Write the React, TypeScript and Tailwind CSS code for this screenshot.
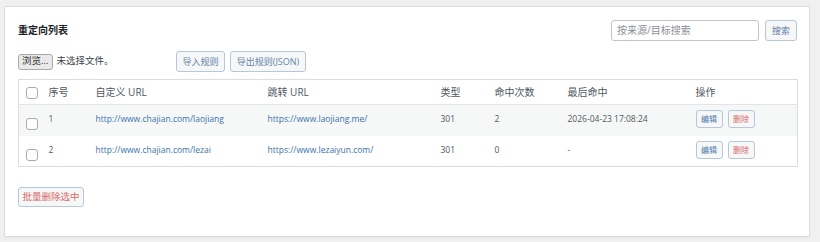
import React from "react";

const font = { fontFamily: '"Open Sans", "Noto Sans CJK SC", sans-serif' };

type Rule = { id: number; from: string; to: string; type: string; hits: string; last: string };

const rules: Rule[] = [
  { id: 1, from: "http://www.chajian.com/laojiang", to: "https://www.laojiang.me/", type: "301", hits: "2", last: "2026-04-23 17:08:24" },
  { id: 2, from: "http://www.chajian.com/lezai", to: "https://www.lezaiyun.com/", type: "301", hits: "0", last: "-" },
];

const Check = () => (
  <span className="inline-block w-[12px] h-[12px] rounded-[3px] border border-[#a7aaad] bg-white align-middle" />
);

export default function App() {
  return (
    <div className="w-[820px] h-[242px] bg-[#f0f0f1] pt-[6px] pl-[4px]" style={font}>
      <div className="w-[806px] h-[231px] bg-white border border-[#dcdcde] rounded-[2px] shadow-[0_1px_1px_rgba(0,0,0,0.04)] pt-[13px] pl-[13px] pr-[12px]">
        <div className="flex items-center justify-between h-[21px]">
          <h2 className="text-[10px] font-bold text-[#1d2327]">重定向列表</h2>
          <div className="flex items-center gap-[6px]">
            <div className="w-[148px] h-[21px] border border-[#c3c4c7] rounded-[3px] pl-[5px] flex items-center text-[10px] text-[#8c8f94]">
              按来源/目标搜索
            </div>
            <button className="w-[32px] h-[21px] border border-[#b7c6d9] bg-[#f6f7f7] rounded-[3px] text-[9px] text-[#5a7ea8]">搜索</button>
          </div>
        </div>

        <div className="flex items-center mt-[10px] h-[21px]">
          <div className="w-[158px] flex items-center gap-[4px]">
            <span className="h-[16px] px-[3px] flex items-center border border-[#a9a9a9] bg-[#e9e9ea] rounded-[3px] text-[9.5px] text-[#333]">浏览...</span>
            <span className="text-[9.5px] text-[#3c434a]">未选择文件。</span>
          </div>
          <div className="flex gap-[5px]">
            <button className="w-[49px] h-[21px] border border-[#b7c6d9] bg-[#f6f7f7] rounded-[3px] text-[9px] text-[#6585ab]">导入规则</button>
            <button className="w-[76px] h-[21px] border border-[#b7c6d9] bg-[#f6f7f7] rounded-[3px] text-[9px] text-[#6585ab]">导出规则(JSON)</button>
          </div>
        </div>

        <table className="mt-[7px] w-[779px] table-fixed border border-[#dcdcde] border-collapse text-[10px] text-[#50575e]">
          <colgroup>
            <col className="w-[30px]" />
            <col className="w-[47px]" />
            <col className="w-[172px]" />
            <col className="w-[173px]" />
            <col className="w-[54px]" />
            <col className="w-[73px]" />
            <col className="w-[128px]" />
            <col className="w-[102px]" />
          </colgroup>
          <thead>
            <tr className="h-[25px] border-b border-[#e4e4e6] text-left">
              <th className="font-normal pl-[7px] pt-[1px]"><Check /></th>
              <th className="font-normal">序号</th>
              <th className="font-normal">自定义 URL</th>
              <th className="font-normal">跳转 URL</th>
              <th className="font-normal">类型</th>
              <th className="font-normal">命中次数</th>
              <th className="font-normal">最后命中</th>
              <th className="font-normal">操作</th>
            </tr>
          </thead>
          <tbody>
            {rules.map((r, i) => (
              <tr key={r.id} className={`h-[31px] align-top text-[8.5px] leading-[14px] ${i === 0 ? "bg-[#f6f7f7]" : "bg-white"}`}>
                <td className="pl-[7px] pt-[13px] leading-none"><Check /></td>
                <td className="pt-[7px]">{r.id}</td>
                <td className="pt-[7px] text-[#3a73ae]">{r.from}</td>
                <td className="pt-[7px] text-[#3a73ae]">{r.to}</td>
                <td className="pt-[7px]">{r.type}</td>
                <td className="pt-[7px]">{r.hits}</td>
                <td className="pt-[7px]">{r.last}</td>
                <td className="pt-[5px]">
                  <div className="flex gap-[5px]">
                    <button className="w-[27px] h-[18px] border border-[#b7c6d9] bg-[#f6f7f7] rounded-[3px] text-[8px] text-[#4f7aaa]">编辑</button>
                    <button className="w-[27px] h-[18px] border border-[#b7c6d9] bg-[#f6f7f7] rounded-[3px] text-[8px] text-[#d66a6a]">删除</button>
                  </div>
                </td>
              </tr>
            ))}
          </tbody>
        </table>

        <button className="mt-[20px] w-[66px] h-[20px] border border-[#b7c6d9] bg-[#f6f7f7] rounded-[3px] text-[9.5px] text-[#d66a6a]">批量删除选中</button>
      </div>
    </div>
  );
}
